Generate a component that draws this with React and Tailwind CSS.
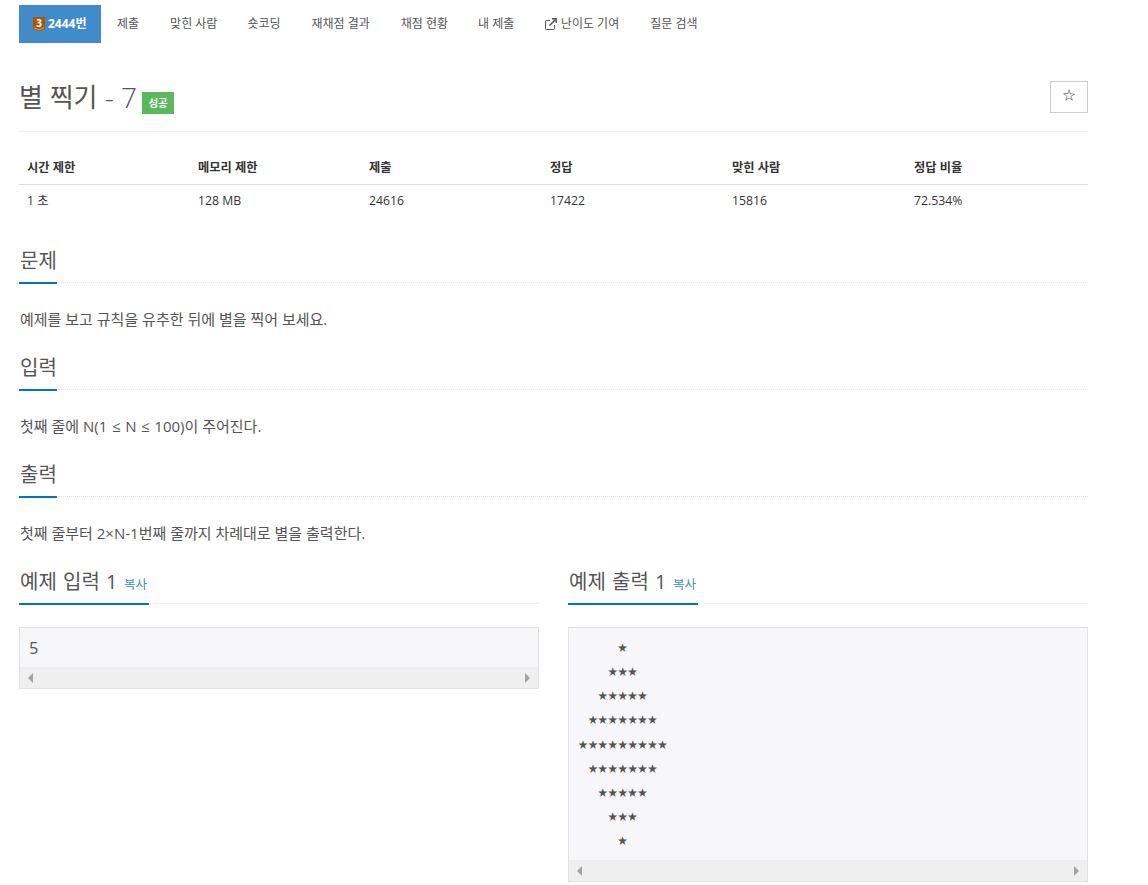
const FONT = "font-['Open_Sans','Noto_Sans_CJK_KR',sans-serif]";

const stats = [
  ["시간 제한", "1 초"],
  ["메모리 제한", "128 MB"],
  ["제출", "24616"],
  ["정답", "17422"],
  ["맞힌 사람", "15816"],
  ["정답 비율", "72.534%"],
];

const stars = ["    *", "   ***", "  *****", " *******", "*********", " *******", "  *****", "   ***", "    *"];

function Tier() {
  return (
    <svg width="12" height="15" viewBox="0 0 12 15" className="shrink-0">
      <path d="M0 0 H12 V12 L6 14.5 L0 12 Z" fill="#ad5600" />
      <path d="M1 10.8 L6 12.8 L11 10.8" fill="none" stroke="#e8b98c" strokeWidth="0.8" />
      <text x="6" y="9.5" textAnchor="middle" fontSize="10" fontWeight="700" fill="#fff" fontFamily="Open Sans">3</text>
    </svg>
  );
}

function ExternalIcon() {
  return (
    <svg width="12" height="12" viewBox="0 0 12 12" fill="none" stroke="#555" strokeWidth="1" className="shrink-0">
      <path d="M9.5 7 V10.5 A1 1 0 0 1 8.5 11.5 H1.5 A1 1 0 0 1 0.5 10.5 V3.5 A1 1 0 0 1 1.5 2.5 H5" />
      <path d="M4.5 7.5 L10.5 1.5" strokeWidth="1.6" />
      <path d="M7 0.8 H11.2 V5" strokeWidth="1.4" />
    </svg>
  );
}

function Heading({ children, copy }) {
  return (
    <div className="h-[35px] border-b border-dotted border-[#e5e5e5]">
      <h2 className="inline-block h-[36px] border-b-2 border-[#0076c0] pl-px text-[20px] leading-[26px] font-normal text-[#555] [word-spacing:1px]">
        {children}
        {copy && <a className="mr-[2px] ml-[6.5px] text-[12.5px] text-[#428bca]">복사</a>}
      </h2>
    </div>
  );
}

function Section({ title, children }) {
  return (
    <section className="h-[107px]">
      <Heading>{title}</Heading>
      <p className="mt-[26px] pl-px text-[15px] leading-5 text-[#555]">{children}</p>
    </section>
  );
}

function ScrollBar() {
  return (
    <div className="flex h-[21px] items-center justify-between bg-[#efefef] px-2">
      <span className="h-0 w-0 border-y-[5px] border-r-[5px] border-y-transparent border-r-[#a3a3a3]" />
      <span className="h-0 w-0 border-y-[5px] border-l-[5px] border-y-transparent border-l-[#a3a3a3]" />
    </div>
  );
}

function Sample({ title, lines, fontClass }) {
  return (
    <div className="w-[520px]">
      <Heading copy>{title}</Heading>
      <div className="mt-[23px] border border-[#e1e1e8] bg-[#f7f7f9]">
        <pre className={`${fontClass} px-[9px] pt-2 pb-[7px] text-[16.5px] leading-[24.15px] text-[#555]`}>
          {lines.join("\n")}
        </pre>
        <ScrollBar />
      </div>
    </div>
  );
}

export default function App() {
  return (
    <div className={`${FONT} min-h-[885px] bg-white pt-[5px] pr-[60px] pl-[19px] text-[#555]`}>
      <nav className="flex h-[38px] items-center text-[12px]">
        <a className="flex h-full items-center gap-[3px] bg-[#428bca] px-[14px] font-bold text-white">
          <Tier />
          2444번
        </a>
        <a className="ml-px px-[15.5px]">제출</a>
        <a className="px-[15.5px]">맞힌 사람</a>
        <a className="-ml-px px-[15.5px]">숏코딩</a>
        <a className="px-[15.5px]">재채점 결과</a>
        <a className="px-[15.5px]">채점 현황</a>
        <a className="-ml-px px-[15.5px]">내 제출</a>
        <a className="-ml-[0.5px] flex items-center gap-1 px-[15.5px]">
          <ExternalIcon />
          난이도 기여
        </a>
        <a className="px-[15.5px]">질문 검색</a>
      </nav>

      <div className="flex h-[89px] justify-between border-b border-[#eee] pt-[38px]">
        <h1 className="flex items-start pt-[2px] text-[28px] leading-[28px] font-light whitespace-pre">
          <span className="text-[26px] font-normal">별 찍기</span> - 7
          <span className="mt-[9px] ml-[5px] flex h-[22px] w-8 items-center justify-center bg-[#5cb85c] text-[10.5px] font-bold text-white">성공</span>
        </h1>
        <button className="flex h-8 w-[38px] items-center justify-center border border-[#ccc] pb-[2px] text-[12.5px] text-[#333]">☆</button>
      </div>

      <div className="mt-[19px] grid grid-cols-[171px_171px_181px_182px_182px_182px] text-[12.25px] text-[#333]">
        {stats.map(([h]) => (
          <div key={h} className="flex h-[34px] items-center border-b border-[#ddd] pt-[2px] pl-2 font-bold">{h}</div>
        ))}
        {stats.map(([h, v]) => (
          <div key={h} className="flex h-[31px] items-center pt-[2px] pl-2">{v}</div>
        ))}
      </div>

      <div className="mt-8">
        <Section title="문제">예제를 보고 규칙을 유추한 뒤에 별을 찍어 보세요.</Section>
        <Section title="입력">
          첫째 줄에 N<span className="[word-spacing:0.75px]">(1 ≤ N ≤ 100)</span>이 주어진다.
        </Section>
        <Section title="출력">첫째 줄부터 2×N-1번째 줄까지 차례대로 별을 출력한다.</Section>
      </div>

      <div className="flex justify-between">
        <Sample title="예제 입력 1" lines={["5"]} fontClass="font-['Open_Sans',sans-serif]" />
        <Sample
          title="예제 출력 1"
          lines={stars.map((s) => s.replaceAll("*", "★"))}
          fontClass="font-['Liberation_Mono','DejaVu_Sans_Mono',monospace]"
        />
      </div>
    </div>
  );
}
